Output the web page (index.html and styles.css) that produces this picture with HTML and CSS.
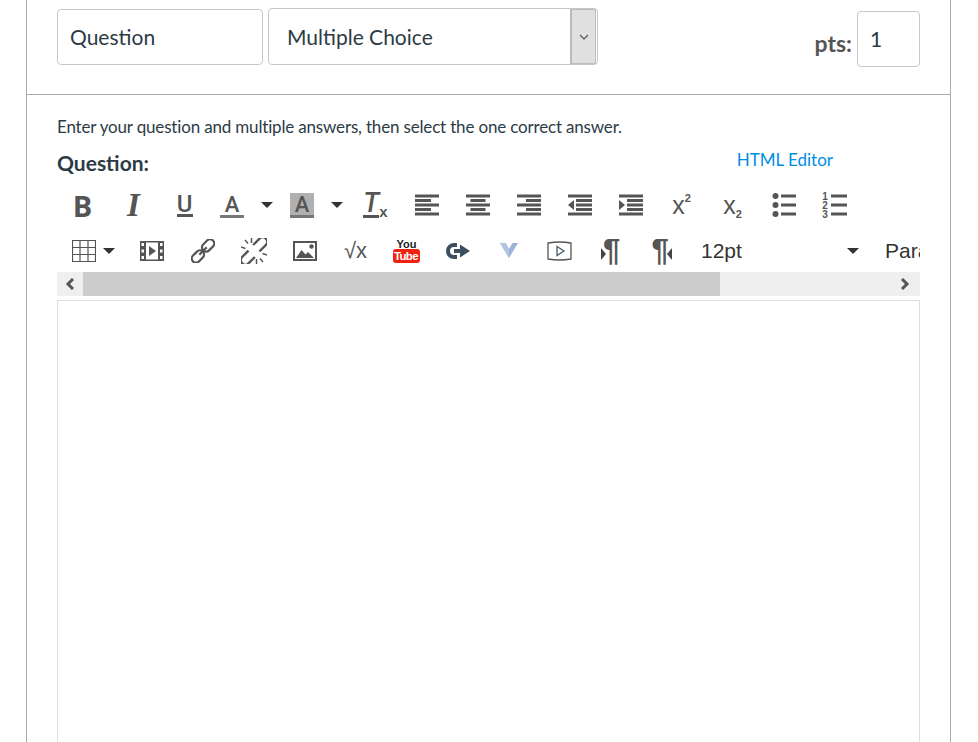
FILE: index.html
```html
<!DOCTYPE html>
<html lang="en">
<head>
<meta charset="utf-8">
<title>Question editor</title>
<link rel="stylesheet" href="styles.css">
</head>
<body>
<main class="panel">
  <header class="qhead">
    <div class="field name">Question</div>
    <div class="field type"><span class="type-label">Multiple Choice</span>
      <span class="type-btn"><svg width="10" height="6" viewBox="0 0 10 6"><path d="M1 1l4 4 4-4" fill="none" stroke="#555" stroke-width="1.2"/></svg></span>
    </div>
    <div class="pts"><span class="pts-label">pts:</span><div class="field pts-input">1</div></div>
  </header>
  <section class="qbody">
    <p class="hint">Enter your question and multiple answers, then select the one correct answer.</p>
    <div class="qtitle"><h2>Question:</h2><a class="html-link" href="#">HTML Editor</a></div>
    <div class="toolbar">
      <div class="row row1">
        <span class="btn t-b">B</span>
        <span class="btn t-i">I</span>
        <span class="btn"><span class="t-u">U</span></span>
        <span class="group g1"><span class="abox"><span class="t-a">A</span></span><i class="caret"></i></span>
        <span class="group g2"><span class="abox"><span class="t-a hl">A</span></span><i class="caret"></i></span>
        <span class="btn"><span class="t-tx"><span class="t-tx-t">T</span><small>x</small></span></span>
        <span class="btn"><svg width="24" height="22" viewBox="0 0 24 22"><path class="ic-line" d="M0 2h24M0 6.500h16M0 11h24M0 15.500h16M0 20h24"/></svg></span>
        <span class="btn"><svg width="24" height="22" viewBox="0 0 24 22"><path class="ic-line" d="M0 2h24M4.500 6.500h15M0 11h24M4.500 15.500h15M0 20h24"/></svg></span>
        <span class="btn"><svg width="24" height="22" viewBox="0 0 24 22"><path class="ic-line" d="M0 2h24M9 6.500h15M0 11h24M9 15.500h15M0 20h24"/></svg></span>
        <span class="btn"><svg width="24" height="22" viewBox="0 0 24 22"><path class="ic-line" d="M0 2h24M8 6.500h16M8 11h16M8 15.500h16M0 20h24"/><path class="ic-fill" d="M6 6v10l-6-5z"/></svg></span>
        <span class="btn"><svg width="24" height="22" viewBox="0 0 24 22"><path class="ic-line" d="M0 2h24M8 6.500h16M8 11h16M8 15.500h16M0 20h24"/><path class="ic-fill" d="M0 6v10l6-5z"/></svg></span>
        <span class="btn"><span class="t-x">x<sup>2</sup></span></span>
        <span class="btn"><span class="t-x">x<sub>2</sub></span></span>
        <span class="btn"><svg width="24" height="24" viewBox="0 0 24 24"><path class="ic-line" d="M9 3h15M9 12h15M9 21h15"/><circle class="ic-fill" cx="3.500" cy="3" r="3"/><circle class="ic-fill" cx="3.500" cy="12" r="3"/><circle class="ic-fill" cx="3.500" cy="21" r="3"/></svg></span>
        <span class="btn"><span class="ol"><span class="ol-nums"><b>1</b><b>2</b><b>3</b></span><svg width="16" height="24" viewBox="0 0 16 24"><path class="ic-line" d="M0 3h16M0 12h16M0 21h16"/></svg></span></span>
      </div>
      <div class="row row2">
        <span class="group g-table"><svg width="24" height="22" viewBox="0 0 24 22"><path class="ic-thin" d="M.5.500h23v21H.5zM8 .5v21M16 .5v21M.5 7.500h23M.5 14.500h23"/></svg><i class="caret"></i></span>
        <span class="btn"><svg width="24" height="20" viewBox="0 0 24 20"><path class="ic-fill" fill-rule="evenodd" d="M0 0h24v20H0zM6 1.500v17h12v-17zM1.500 2v3H4V2zM1.500 8.500v3H4v-3zM1.500 15v3H4v-3zM20 2v3h2.500V2zM20 8.500v3h2.500v-3zM20 15v3h2.500v-3z"/><path class="ic-fill" d="M9 5l7 5-7 5z"/></svg></span>
        <span class="btn"><svg width="24" height="24" viewBox="0 0 26 26"><g class="ic-link"><rect x="11" y="2.500" width="15" height="9" rx="4.500" transform="rotate(-45 18.500 7)"/><rect x="0" y="14.500" width="15" height="9" rx="4.500" transform="rotate(-45 7.500 19)"/><path d="M9 17L17 9"/></g></svg></span>
        <span class="btn"><svg width="26" height="26" viewBox="0 0 26 26"><g class="ic-link"><path transform="rotate(-45 18.500 7)" d="M14 2.500h9a4.500 4.500 0 0 1 0 9h-9"/><path transform="rotate(-45 7.500 19)" d="M12 14.500H3a4.500 4.500 0 0 0 0 9h9"/></g><path class="ic-ray" d="M10.500 0v5M4 2l3 3.500M0 9l4.500 1.500M15.500 26v-5M22 24l-3-3.500M26 17l-4.500-1.500"/></svg></span>
        <span class="btn"><svg width="24" height="20" viewBox="0 0 24 20"><path class="ic-fill" fill-rule="evenodd" d="M0 0h24v20H0zM2 2v16h20V2z"/><path class="ic-fill" d="M3 17l5.500-8 4 4.500 2.500-2.500 6 6z"/><circle class="ic-fill" cx="18.500" cy="5.500" r="2.200"/></svg></span>
        <span class="btn t-sqrt">√x</span>
        <span class="btn"><span class="yt"><b class="yt-you">You</b><b class="yt-tube">Tube</b></span></span>
        <span class="btn"><svg width="24" height="16" viewBox="0 0 24 16"><path d="M11 2H8a6 6 0 0 0 0 12h3" fill="none" stroke="#3d4f5e" stroke-width="4"/><path d="M8 6h6V1.500l10 6.500-10 6.500V10H8z" fill="#3d4f5e"/></svg></span>
        <span class="btn"><svg width="18" height="15" viewBox="0 0 18 15"><path d="M0 0h5.500L9 6l3.500-6H18l-9 15z" fill="#9cb2d6"/><path d="M0 0h5.500L9 6v9z" fill="#b3c4e2"/></svg></span>
        <span class="btn"><svg width="25" height="20" viewBox="0 0 25 20"><path d="M1 2q11.500-2 23 0v16q-11.500 2-23 0z" fill="none" stroke="#555" stroke-width="1.300"/><path d="M10 5.500l7 4.500-7 4.500z" fill="none" stroke="#4a5a68" stroke-width="1.300"/></svg></span>
        <span class="btn"><span class="para"><i class="tri-l"></i><span class="t-para">¶</span></span></span>
        <span class="btn"><span class="para"><span class="t-para">¶</span><i class="tri-r"></i></span></span>
        <span class="size"><span class="size-txt">12pt</span><i class="caret"></i></span>
        <span class="format">Paragraph</span>
      </div>
    </div>
    <div class="scrollbar">
      <span class="sb-btn"><svg width="12" height="12" viewBox="0 0 12 12"><path d="M9 1L4 6l5 5" fill="none" stroke="#555" stroke-width="3"/></svg></span>
      <span class="sb-thumb"></span>
      <span class="sb-rest"><svg width="12" height="12" viewBox="0 0 12 12"><path d="M3 1l5 5-5 5" fill="none" stroke="#555" stroke-width="3"/></svg></span>
    </div>
    <div class="editor"></div>
  </section>
</main>
</body>
</html>
```
FILE: styles.css
```css
* { box-sizing: border-box; }
html, body { margin: 0; height: 742px; overflow: hidden; background: #fff; }
body { font-family: Lato, "Open Sans", sans-serif; color: #2d3b45; }
.panel { margin-left: 26px; width: 925px; height: 742px; border-left: 1px solid #aaa; border-right: 1px solid #aaa; }
.qhead { height: 95px; border-bottom: 1px solid #aaa; display: flex; padding: 8px 30px 0; align-items: flex-start; }
.field { background: #fff; border: 1px solid #c8c8c8; border-radius: 4px; font-size: 21px; }
.name { width: 206px; height: 56px; margin-top: 1px; padding: 0 12px; line-height: 53px; }
.type { width: 330px; height: 57px; margin-left: 5px; padding-left: 18px; line-height: 55px; display: flex; justify-content: space-between; overflow: hidden; }
.type-btn { width: 26px; margin-right: 1px; background: #e0e0e0; border: 1px solid #bbb; border-left-width: 2px; display: flex; align-items: center; justify-content: center; }
.pts { margin-left: auto; display: flex; align-items: center; margin-top: 3px; }
.pts-label { font-size: 23px; font-weight: 700; color: #555; margin: 7px 5px 0 0; }
.pts-input { width: 63px; height: 56px; padding: 0 12px; line-height: 54px; font-size: 21px; }
.qbody { padding: 0 30px; }
.hint { margin: 21px 0 0; font-size: 17px; line-height: 22px; letter-spacing: -.17px; }
.qtitle { display: flex; justify-content: space-between; align-items: flex-start; margin-top: 11px; height: 33px; }
.qtitle h2 { margin: 0; font-size: 21px; line-height: 28px; font-weight: 700; }
.html-link { color: #008ee2; text-decoration: none; font-size: 17px; margin: -2px 87px 0 0; line-height: 26px; }
.toolbar { overflow: hidden; }
.row { display: flex; align-items: center; white-space: nowrap; }
.row1 { height: 46px; }
.row2 { height: 44px; padding-top: 1px; }
.btn { flex: 0 0 51px; display: flex; align-items: center; justify-content: center; height: 100%; color: #555; }
.group { display: flex; align-items: center; height: 100%; flex: none; }
.g1 { width: 75px; padding-left: 5px; margin-left: -1px; }
.g2 { width: 66px; }
.g-table { width: 69px; padding-left: 15px; }
.abox { width: 36px; display: flex; justify-content: center; }
.group > .caret { margin-left: 11px; }
.g-table > .caret { margin-left: 7px; }
.caret { display: block; width: 0; height: 0; border-style: solid; border-width: 6px 6px 0; border-color: #333 transparent transparent; flex: none; }
.ic-line { fill: none; stroke: #555; stroke-width: 3; }
.ic-thin { fill: none; stroke: #555; stroke-width: 1.2; }
.ic-fill { fill: #555; }
.ic-link { fill: none; stroke: #555; stroke-width: 2.400; }
.ic-ray { fill: none; stroke: #555; stroke-width: 1.500; }
.t-b { font: 700 29px "Open Sans", sans-serif; }
.t-i { font: italic 700 33px "Liberation Serif", serif; }
.t-u { font: 500 24px Roboto, sans-serif; border-bottom: 3px solid #555; line-height: 20px; height: 23px; width: 16px; display: flex; justify-content: center; }
.t-a { font: 500 22px Roboto, sans-serif; line-height: 24px; height: 25px; width: 24px; text-align: center; display: block; color: #555; box-shadow: inset 0 -3px 0 #777; }
.hl { background: #b0b0b0; }
.t-tx { display: flex; align-items: flex-end; color: #555; }
.t-tx-t { font: italic 500 27px/23px Roboto, sans-serif; border-bottom: 3px solid #555; display: block; }
.t-tx small { font: 700 15px/14px "Liberation Sans", sans-serif; margin-bottom: -1px; }
.t-x { font: 400 25px "Liberation Sans", sans-serif; line-height: 24px; display: flex; }
.t-x sup { font-size: 11px; font-weight: 700; line-height: 11px; }
.t-x sub { font-size: 11px; font-weight: 700; line-height: 11px; align-self: flex-end; margin-bottom: -3px; }
.ol { display: flex; align-items: center; gap: 3px; }
.ol-nums { display: flex; flex-direction: column; color: #555; }
.ol-nums b { font: 700 10px/9px "Liberation Sans", sans-serif; height: 9px; }
.t-sqrt { font: 400 22px "Liberation Sans", sans-serif; }
.yt { display: flex; flex-direction: column; align-items: center; padding-top: 2px; }
.yt-you { font: 700 11px/9px "Liberation Sans", sans-serif; color: #222; }
.yt-tube { font: 700 11.500px/14px "Liberation Sans", sans-serif; letter-spacing: -.7px; color: #fff; background: #ee2211; border-radius: 3px; padding: 0 2px 0 1px; }
.para { display: flex; align-items: center; }
.t-para { font: 700 31px/28px "Liberation Sans", sans-serif; color: #555; }
.tri-l, .tri-r { display: block; width: 0; height: 0; border-style: solid; border-color: transparent; }
.tri-l { border-width: 6px 0 6px 5px; border-left-color: #444; margin: 6px -3px 0 0; }
.tri-r { border-width: 6px 5px 6px 0; border-right-color: #444; margin: 6px 0 0 -2px; }
.size { flex: 0 0 184px; display: flex; justify-content: space-between; align-items: center; padding: 0 12px 0 14px; font: 400 21px "Liberation Sans", sans-serif; color: #333; }
.format { font: 400 21px "Liberation Sans", sans-serif; color: #333; margin-left: 14px; }
.scrollbar { display: flex; height: 24px; background: #efefef; }
.sb-btn { width: 26px; display: flex; align-items: center; justify-content: center; flex: none; }
.sb-thumb { width: 637px; background: #ccc; flex: none; }
.sb-rest { flex: 1; display: flex; align-items: center; justify-content: flex-end; padding-right: 9px; }
.editor { margin-top: 4px; height: 460px; border: 1px solid #ddd; background: #fff; }
```
